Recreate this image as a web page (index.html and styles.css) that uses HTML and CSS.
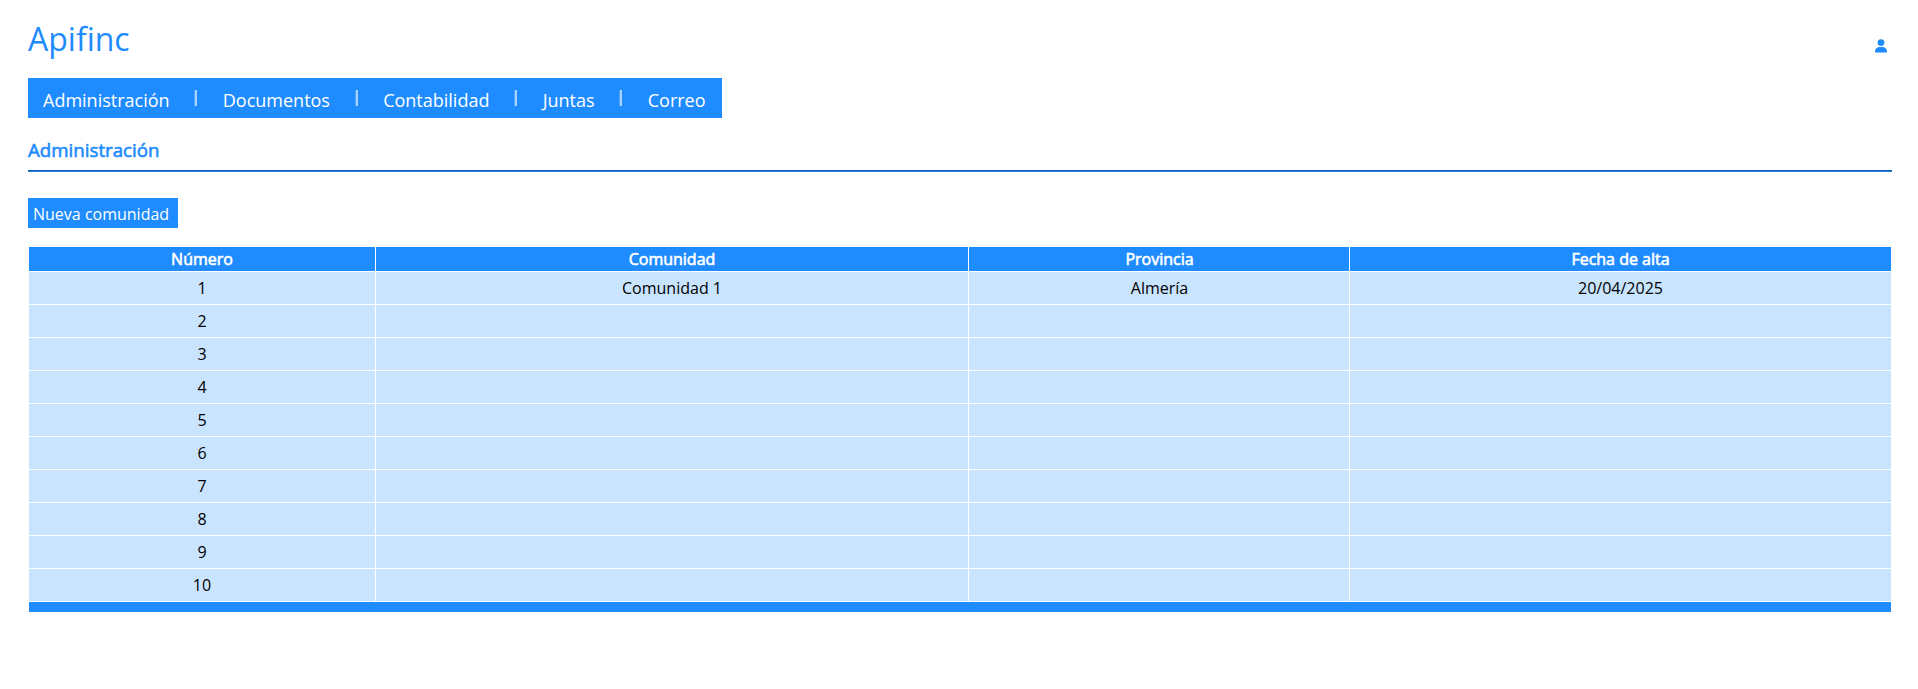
FILE: index.html
```html
<!DOCTYPE html>
<html lang="es">
<head>
<meta charset="utf-8">
<title>Apifinc</title>
<link rel="stylesheet" href="styles.css">
</head>
<body>
<header class="header">
  <h1 class="brand">Apifinc</h1>
  <a class="user" aria-label="Usuario"><svg width="12" height="14" viewBox="0 0 12 14"><circle cx="6" cy="3.6" r="3.4"/><path d="M0 13.4V12.6C0 9.6 2.2 8 4.6 8H7.4C9.8 8 12 9.6 12 12.6V13.4Z"/></svg></a>
</header>
<nav class="nav">
  <a class="nav-item">Administración</a>
  <a class="nav-item">Documentos</a>
  <a class="nav-item">Contabilidad</a>
  <a class="nav-item">Juntas</a>
  <a class="nav-item">Correo</a>
</nav>
<main>
  <h2 class="title">Administración</h2>
  <button class="button">Nueva comunidad</button>
  <table class="table">
    <colgroup><col class="col-number"><col class="col-community"><col class="col-province"><col class="col-date"></colgroup>
    <thead><tr><th>Número</th><th>Comunidad</th><th>Provincia</th><th>Fecha de alta</th></tr></thead>
    <tbody>
      <tr><td>1</td><td>Comunidad 1</td><td>Almería</td><td>20/04/2025</td></tr>
      <tr><td>2</td><td></td><td></td><td></td></tr>
      <tr><td>3</td><td></td><td></td><td></td></tr>
      <tr><td>4</td><td></td><td></td><td></td></tr>
      <tr><td>5</td><td></td><td></td><td></td></tr>
      <tr><td>6</td><td></td><td></td><td></td></tr>
      <tr><td>7</td><td></td><td></td><td></td></tr>
      <tr><td>8</td><td></td><td></td><td></td></tr>
      <tr><td>9</td><td></td><td></td><td></td></tr>
      <tr><td>10</td><td></td><td></td><td></td></tr>
    </tbody>
    <tfoot><tr><td colspan="4"></td></tr></tfoot>
  </table>
</main>
</body>
</html>
```
FILE: styles.css
```css
* { box-sizing: border-box; }
body {
  margin: 0;
  padding: 0 26px 0 28px;
  background: #fff;
  color: #000;
  font: 16px/24px "Open Sans", sans-serif;
}
.header {
  display: flex;
  justify-content: space-between;
  height: 78px;
  padding: 17px 5px 0 0;
}
.brand {
  margin: 0;
  color: #1e8bff;
  font-size: 32px;
  font-weight: 400;
  line-height: 44px;
}
.user { padding-top: 22px; line-height: 0; }
.user svg { fill: #1e8bff; }
.nav {
  display: flex;
  width: 694px;
  height: 40px;
  padding-left: 15px;
  background: #1e8bff;
  color: #fff;
  font-size: 18px;
  line-height: 44px;
}
.nav-item { display: flex; }
.nav-item + .nav-item::before {
  content: "";
  width: 2px;
  height: 16px;
  margin: 12px 25.5px 0 24.7px;
  border-left: 1px solid #52a6ff;
  background: #a5d1ff;
}
.title {
  height: 53px;
  margin: 0 0 27px;
  padding-top: 20px;
  border-bottom: 1px solid #0b5cb5;
  box-shadow: 0 1px #2484df;
  color: #1e8bff;
  font-size: 18.72px;
  font-weight: 400;
  line-height: 24px;
  -webkit-text-stroke: 0.6px currentColor;
}
.button {
  display: block;
  width: 150px;
  height: 30px;
  margin-bottom: 19px;
  padding: 2px 5px 0;
  border: 0;
  background: #1e8bff;
  color: #fff;
  font: 16px/28px "Open Sans", sans-serif;
  text-align: left;
  white-space: nowrap;
}
.table {
  width: 100%;
  table-layout: fixed;
  border: 1px solid #fff;
  border-top: 0;
  border-spacing: 0;
  text-align: center;
}
.col-number { width: 347px; }
.col-community { width: 593px; }
.col-province { width: 381px; }
.table th, .table td {
  padding: 0;
  border-bottom: 1px solid #fff;
  border-right: 1px solid #fff;
}
.table th:nth-child(3), .table td:nth-child(3) { padding-left: 1px; }
.table th:last-child, .table td:last-child { border-right: 0; }
.table th {
  height: 25px;
  background: #1e8bff;
  color: #fff;
  font-weight: 400;
  -webkit-text-stroke: 0.6px currentColor;
}
.table tbody td { height: 33px; background: #c9e4ff; }
.table tfoot td { height: 10px; border: 0; background: #1e8bff; }
```
